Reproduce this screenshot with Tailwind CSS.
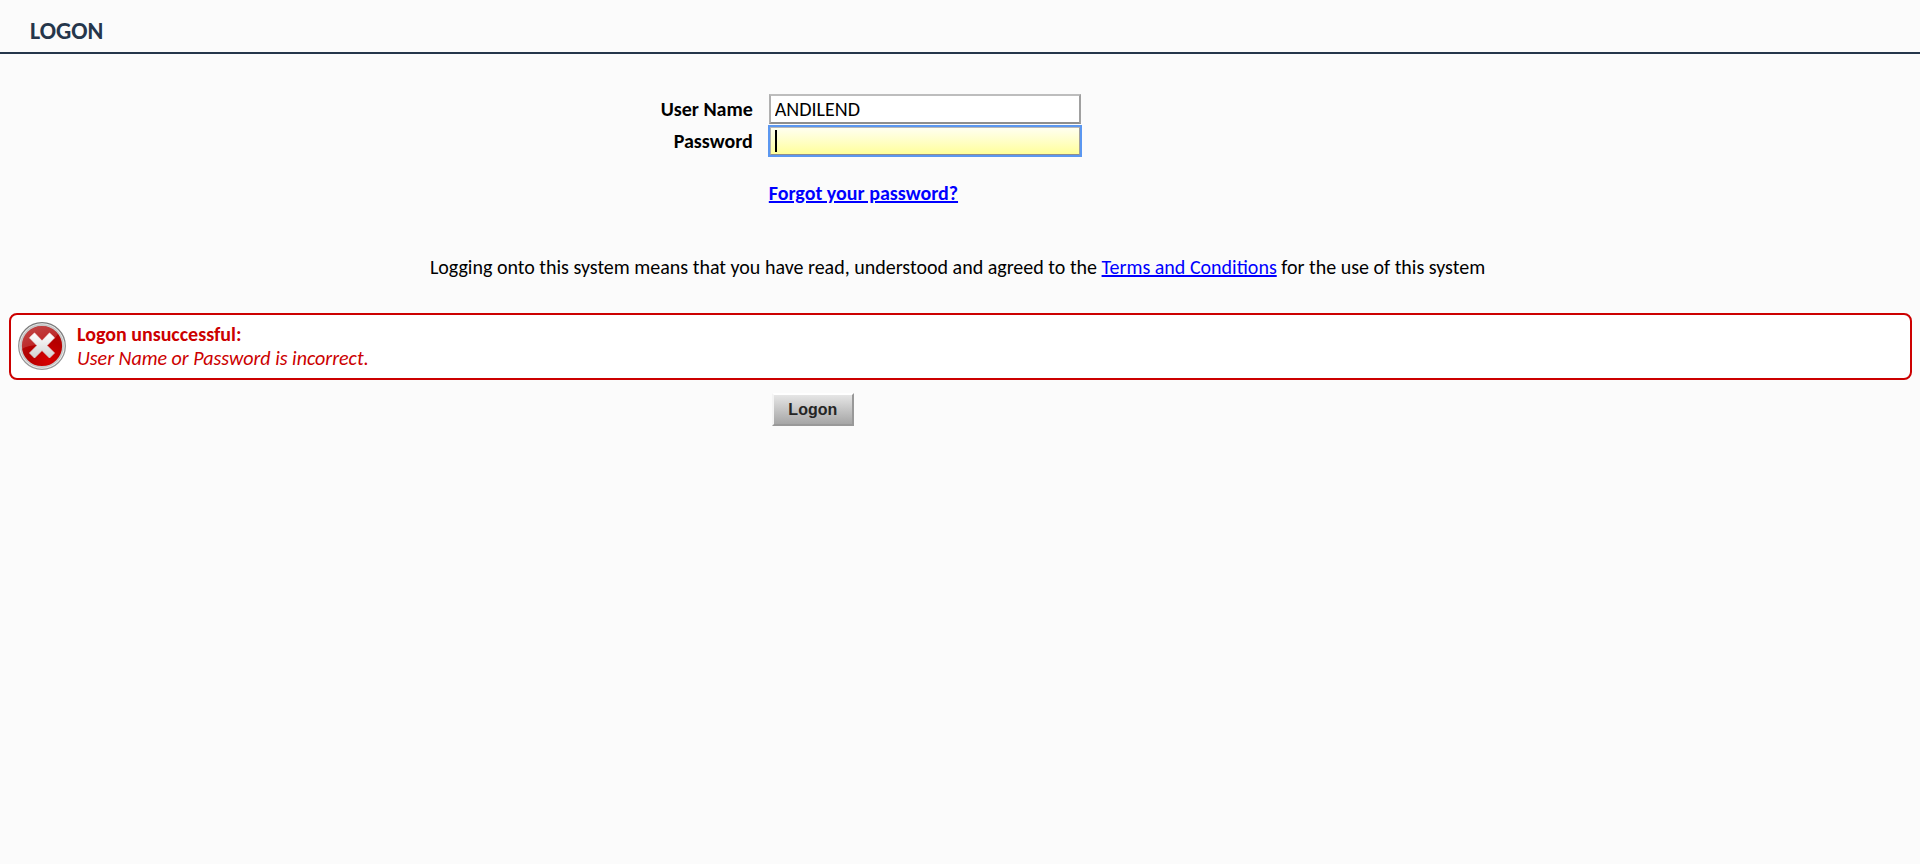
<!DOCTYPE html>
<html lang="en">
<head>
<meta charset="utf-8">
<meta name="viewport" content="width=device-width, initial-scale=1">
<title>Logon</title>
<script src="https://cdn.jsdelivr.net/npm/@tailwindcss/browser@4"></script>
</head>
<body class="min-h-screen bg-[#fbfbfb] font-['Calibri','Carlito','Lato',sans-serif] text-[20px] leading-6 text-black">
<header class="border-b-2 border-[#25364b] px-[30px] pt-[19px] pb-[9px]">
  <h1 class="text-[24px] leading-6 font-bold text-[#25364b]">LOGON</h1>
</header>
<form>
  <div class="mt-10 grid grid-cols-[2fr_3fr] items-center gap-x-4 gap-y-0.5 pr-[22px]">
    <label for="user" class="text-right font-bold">User Name</label>
    <input id="user" type="text" value="ANDILEND" class="h-[30px] w-[312px] border-2 border-t-[#bdbdbd] border-r-[#a0a0a0] border-b-[#8e8e8e] border-l-[#b0b0b0] bg-white px-1 outline-none">
    <label for="password" class="text-right font-bold">Password</label>
    <div class="relative flex">
      <input id="password" type="password" class="h-[30px] w-[312px] border-2 border-t-[#b8b8b8] border-r-[#a0a0a0] border-b-[#8e8e8e] border-l-[#b0b0b0] bg-linear-to-b from-[#fffff0] to-[#ffff99] px-1 caret-transparent outline-2 -outline-offset-1 outline-[#5b97f0]">
      <span class="absolute top-1 left-1.5 h-[22px] w-0.5 bg-black" aria-hidden="true"></span>
    </div>
    <a href="#" class="col-start-2 mt-[23px] justify-self-start font-bold text-[#0000ff] underline">Forgot your password?</a>
  </div>
  <p class="mt-[50px] pr-[5px] text-center">Logging onto this system means that you have read, understood and agreed to the <a href="#" class="text-[#0000ff] underline">Terms and Conditions</a> for the use of this system</p>
  <div role="alert" class="mt-[34px] mr-2 ml-[9px] flex items-start gap-[11px] rounded-lg border-2 border-[#cc0000] bg-white p-[7px] text-[#cc0000]">
    <svg class="size-12 shrink-0" viewBox="0 0 48 48" aria-hidden="true">
      <defs>
        <linearGradient id="rim" x1="0" y1="0" x2="0" y2="1"><stop offset="0" stop-color="#777"/><stop offset=".5" stop-color="#8b8b8b"/><stop offset="1" stop-color="#999"/></linearGradient>
        <radialGradient id="red" cx=".65" cy=".85" r=".8"><stop offset="0" stop-color="#d80000"/><stop offset=".6" stop-color="#b40000"/><stop offset="1" stop-color="#b00c0c"/></radialGradient>
        <linearGradient id="shine" x1="0" y1="0" x2=".7" y2="1"><stop offset="0" stop-color="#fff" stop-opacity=".24"/><stop offset="1" stop-color="#fff" stop-opacity=".12"/></linearGradient>
        <linearGradient id="cross" x1="0" y1="0" x2="0" y2="1"><stop offset="0" stop-color="#fff"/><stop offset="1" stop-color="#d2d2d2"/></linearGradient>
      </defs>
      <circle cx="24" cy="24" r="23.3" fill="#f0f0f0" stroke="url(#rim)" stroke-width="1.2"/>
      <circle cx="24" cy="24" r="21" fill="url(#red)" stroke="#c8c8c8" stroke-width="1.8"/>
      <path d="M3.8 27A20.3 20.3 0 0 1 40 12Q34 22 22 23Q10 23 3.8 27Z" fill="url(#shine)"/>
      <path d="M16.5 11L24 18.8L31.5 11L36.5 15.8L29 23.5L36.5 31L31.5 36L24 28.5L16.5 36L11.5 31L19 23.5L11.5 15.8Z" fill="url(#cross)" stroke="url(#cross)" stroke-width=".8" stroke-linejoin="round"/>
    </svg>
    <div class="pb-px">
      <strong class="block font-bold">Logon unsuccessful:</strong>
      <em class="block">User Name or Password is incorrect.</em>
    </div>
  </div>
  <div class="mt-[13px] grid grid-cols-[2fr_3fr] gap-x-4 pr-[22px]">
    <button type="submit" class="col-start-2 ml-[3px] h-[33px] w-[82px] justify-self-start border-2 border-t-white border-r-[#999] border-b-[#999] border-l-[#f4f4f4] bg-linear-to-b from-[#e6e6e6] to-[#a6a6a6] font-['Liberation_Sans',sans-serif] text-[16px] font-bold text-[#252525]">Logon</button>
  </div>
</form>
<script>
document.getElementById('password').focus();
</script>
</body>
</html>
